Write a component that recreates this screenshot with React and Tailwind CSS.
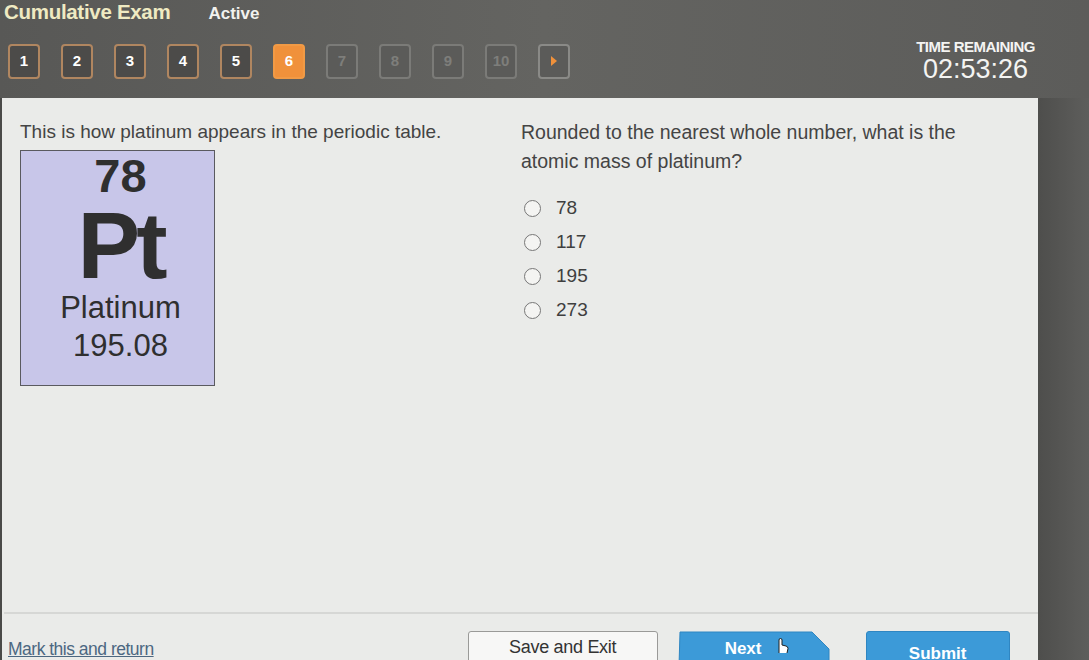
import React from 'react';

const navItems = [
  { n: '1', state: 'done' },
  { n: '2', state: 'done' },
  { n: '3', state: 'done' },
  { n: '4', state: 'done' },
  { n: '5', state: 'done' },
  { n: '6', state: 'current' },
  { n: '7', state: 'locked' },
  { n: '8', state: 'locked' },
  { n: '9', state: 'locked' },
  { n: '10', state: 'locked' },
];

const boxStyles = {
  done: 'border-[#b08660] bg-[#4c4b49] text-white',
  current: 'border-[#f19a45] bg-[#f0913b] text-white',
  locked: 'border-[#7b7b78] bg-[#5b5b59] text-[#7e7e7b]',
};

const options = ['78', '117', '195', '273'];

const App = () => {
  return (
    <div className="w-[1089px] h-[660px] overflow-hidden bg-[#5e5e5c] font-['Liberation_Sans',Arial,sans-serif] flex flex-col">
      {/* Header */}
      <div className="h-[98px] shrink-0 bg-gradient-to-r from-[#585856] via-[#646461] to-[#5c5c5a] relative">
        <div className="flex items-baseline pl-[4px] -mt-[3px]">
          <span className="text-[20.5px] font-bold text-[#efeac2] tracking-[-0.3px]">Cumulative Exam</span>
          <span className="ml-[38px] text-[17px] font-bold text-[#f2f2ee]">Active</span>
        </div>
        <div className="flex items-center gap-[21px] pl-[8px] mt-[16px]">
          {navItems.map((item) => (
            <div
              key={item.n}
              className={`w-[32px] h-[35px] rounded-[4px] border-2 flex items-center justify-center text-[15px] font-bold ${boxStyles[item.state]}`}
            >
              {item.n}
            </div>
          ))}
          <div className="w-[32px] h-[35px] rounded-[4px] border-2 border-[#8a8a87] bg-[#5b5b59] flex items-center justify-center">
            <svg width="8" height="10" viewBox="0 0 8 10">
              <path d="M1 0 L7 5 L1 10 Z" fill="#f0913b" />
            </svg>
          </div>
        </div>
        <div className="absolute right-[54px] top-[39px] flex flex-col items-center text-[#f4f4f2] leading-none">
          <span className="text-[15px] font-bold tracking-[-0.5px]">TIME REMAINING</span>
          <span className="text-[27px] mt-[2px]">02:53:26</span>
        </div>
      </div>

      {/* Body */}
      <div className="flex flex-1 min-h-0">
        <div className="w-[1038px] bg-[#eaebe9] flex flex-col pl-[2px] border-l-[2px] border-[#4a4a48]">
          <div className="flex flex-1 pt-[22px]">
            {/* Left column */}
            <div className="w-[517px] pl-[16px] text-[#444]">
              <p className="text-[19px] leading-[24px]">This is how platinum appears in the periodic table.</p>
              <div className="mt-[6px] w-[195px] h-[236px] bg-[#c8c6e9] border border-[#5a5a5f] flex flex-col items-center text-[#2f2f2f] pl-[6px]">
                <span className="text-[47px] font-bold leading-none mt-[1px]">78</span>
                <span className="text-[94px] font-bold leading-none tracking-[-4px]">Pt</span>
                <span className="text-[31px] leading-none -mt-[1px]">Platinum</span>
                <span className="text-[31px] leading-none mt-[7px]">195.08</span>
              </div>
            </div>
            {/* Right column */}
            <div className="flex-1 text-[#444]">
              <p className="text-[19.5px] leading-[29px] -mt-[2px] w-[470px]">
                Rounded to the nearest whole number, what is the atomic mass of platinum?
              </p>
              <div className="mt-[22px] flex flex-col gap-[14px] pl-[3px]">
                {options.map((o) => (
                  <label key={o} className="flex items-center gap-[15px] h-[20px] text-[19px] text-[#3f3f3f]">
                    <span className="w-[17px] h-[17px] rounded-full border border-[#777] bg-[#f4f4f2]" />
                    <span>{o}</span>
                  </label>
                ))}
              </div>
            </div>
          </div>

          {/* Footer */}
          <div className="h-[48px] shrink-0 border-t-2 border-[#d6d7d5] flex items-start pt-[17px] relative">
            <a className="ml-[4px] mt-[5px] text-[17.5px] text-[#4c6781] underline tracking-[-0.5px]">
              Mark this and return
            </a>
            <button className="ml-[314px] w-[190px] h-[36px] bg-[#f7f7f6] border border-[#9a9a98] rounded-t-[3px] text-[18px] text-[#333] pb-[3px] tracking-[-0.3px]">
              Save and Exit
            </button>
            <div className="ml-[20px] relative w-[152px] h-[36px]">
              <svg className="absolute inset-0" width="152" height="36" viewBox="0 0 152 36">
                <path d="M2 1 L134 1 L151 18 L151 36 L1 36 Z" fill="#3c9ad8" stroke="#2f86c2" />
              </svg>
              <span className="relative flex items-start pl-[47px] pt-[5px] text-[17px] font-bold text-white gap-[14px]">
                Next
                <svg width="14" height="16" viewBox="0 0 14 16" className="mt-[2px]">
                  <path d="M4 15 L4 2 Q4 0.5 5.5 0.5 Q7 0.5 7 2 L7 7 L11 8 Q13 8.5 13 10.5 L12 15" fill="#fff" stroke="#222" strokeWidth="1" />
                </svg>
              </span>
            </div>
            <button className="ml-[36px] w-[144px] h-[36px] bg-[#3c9ad8] border border-[#2f86c2] rounded-t-[3px] text-[17px] font-bold text-white pt-[9px] flex justify-center items-start">
              Submit
            </button>
          </div>
        </div>
        <div className="flex-1 bg-gradient-to-r from-[#4e4e4c] to-[#5e5e5c]" />
      </div>
    </div>
  );
};

export default App;
